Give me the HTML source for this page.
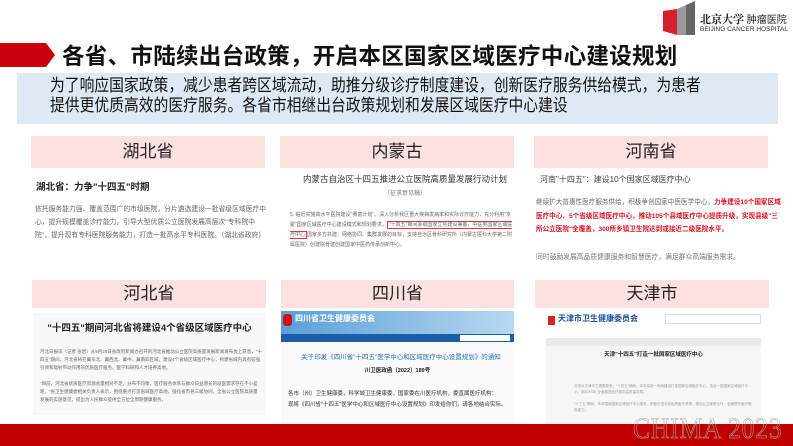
<!DOCTYPE html>
<html><head><meta charset="utf-8"><style>
*{margin:0;padding:0;box-sizing:border-box}
body{width:793px;height:446px;overflow:hidden;background:#fff;position:relative;font-family:"Liberation Sans","Noto Sans CJK SC",sans-serif;color:#222}
.a{position:absolute}
.hd{position:absolute;background:#fde0e0;font-size:17px;text-align:center;color:#222}
.sm{font-size:7px;color:#666;line-height:13px}
</style></head><body>
<svg class="a" style="left:662px;top:1px" width="34" height="34" viewBox="0 0 34 34">
<polygon points="1,10 15,8 15,34 1,30" fill="#d3202a"/>
<polygon points="15,8 24,4 24,34 15,34" fill="#999"/>
<polygon points="24,4 33,0 33,34 24,34" fill="#666"/>
</svg>
<div class="a" style="left:700px;top:11px;font-size:11px;color:#222;font-family:'Noto Serif CJK SC',serif;font-weight:bold;white-space:nowrap">北京大学 <span style="font-family:'Noto Sans CJK SC';font-weight:normal;font-size:10px">肿瘤医院</span></div>
<div class="a" style="left:700px;top:26px;font-size:6.5px;color:#333;white-space:nowrap">BEIJING CANCER HOSPITAL</div>
<svg class="a" style="left:0;top:43px" width="56" height="24"><polygon points="0,0 46,0 55,12 46,24 0,24" fill="#c8000b"/></svg>
<div class="a" style="left:62px;top:39px;font-size:22.5px;font-weight:bold;color:#111;letter-spacing:0.3px;white-space:nowrap">各省、市陆续出台政策，开启本区国家区域医疗中心建设规划</div>
<div class="a" style="left:17px;top:73px;width:761px;height:51px;background:#dfe9f5"></div>
<div class="a" style="left:50px;top:76px;font-size:17px;line-height:20px;color:#111;white-space:nowrap;transform:scaleX(0.87);transform-origin:left top">为了响应国家政策，减少患者跨区域流动，助推分级诊疗制度建设，创新医疗服务供给模式，为患者<br>提供更优质高效的医疗服务。各省市相继出台政策规划和发展区域医疗中心建设</div>

<div class="hd" style="left:31px;top:136px;width:234px;height:32px;line-height:32px">湖北省</div>
<div class="hd" style="left:280px;top:136px;width:234px;height:32px;line-height:32px">内蒙古</div>
<div class="hd" style="left:534px;top:136px;width:234px;height:32px;line-height:32px">河南省</div>

<div class="a" style="left:36px;top:179px;font-size:9.5px;font-weight:bold">湖北省：力争"十四五"时期</div>
<div class="a sm" style="left:35px;top:203px;width:232px;font-size:6.8px">依托服务能力强、覆盖范围广的市级医院，分片遴选建设一批省级区域医疗中心，提升规模覆盖诊疗能力。引导大型优质公立医院发展高层次"专科院中院"，提升现有专科医院服务能力，打造一批高水平专科医院。（湖北省政府）</div>

<div class="a" style="left:290px;top:173px;width:230px;text-align:center;font-size:8.5px;color:#333">内蒙古自治区十四五推进公立医院高质量发展行动计划</div>
<div class="a" style="left:290px;top:188px;width:230px;text-align:center;font-size:6px;color:#777">（征求意见稿）</div>
<div class="a sm" style="left:290px;top:210px;width:226px;font-size:5px;line-height:10px">5. 临近实施高水平医院建设"赛富计划"。深入分析我区重大疾病发病率和实际诊疗能力，充分利用"京蒙"国家区域医疗中心建设模式和规划要求，<span style="border:1px solid #e33;padding:0 1px">"十四五"期间争取国家立项建设兼备，中医类国家区域医疗中心</span>国家多方共建、网络协同、集群发展的目标，支持自治区骨科研究所（内蒙古医科大学第二附属医院）创建院骨建创建国家中医药传承创新中心。</div>

<div class="a" style="left:540px;top:174px;font-size:8px;color:#444">河南"十四五"：建设10个国家区域医疗中心</div>
<div class="a" style="left:536px;top:196px;width:246px;font-size:6.6px;line-height:13.5px;color:#666">继续扩大普惠性医疗服务供给，积极争创国家中医医学中心，<b style="color:#e0101d">力争建设10个国家区域医疗中心、5个省级区域医疗中心，推动105个县域医疗中心提质升级，实现县级"三所公立医院"全覆盖，300所乡镇卫生院达到或接近二级医院水平。</b></div>
<div class="a" style="left:536px;top:251px;font-size:6.8px;color:#777">同时鼓励发展高品质健康服务和智慧医疗，满足群众高端服务需求。</div>

<div class="hd" style="left:32px;top:280px;width:234px;height:28px;line-height:28px">河北省</div>
<div class="hd" style="left:281px;top:280px;width:233px;height:28px;line-height:28px">四川省</div>
<div class="hd" style="left:535px;top:280px;width:234px;height:28px;line-height:28px">天津市</div>

<div class="a" style="left:33px;top:313px;width:233px;height:102px;background:#f8f8f8"></div>
<div class="a" style="left:33px;top:320px;width:233px;text-align:center;font-size:9.5px;font-weight:bold;color:#222">"十四五"期间河北省将建设4个省级区域医疗中心</div>
<div class="a sm" style="left:40px;top:348px;width:222px;font-size:4.5px;line-height:8px">河北日报讯（记者 张岩）从9月28日省政府新闻办召开的河北省推动公立医院高质量发展新闻发布会上获悉，"十四五"期间，河北省将在冀东北、冀西北、冀中、冀南四区域，建设4个省级区域医疗中心，构建省域内具有较强引领和辐射带动作用的优质医疗服务。医学科研和人才培养高地。<br><br>"目前，河北省优质医疗资源总量相对不足，分布不均衡，医疗服务体系与群众日益增长的就医需求存在不小差距。"省卫生健康委相关负责人表示，围绕重点打造省域医疗高地，强化省市县三级协同，全省公立医院高质量发展的实施意见，提出为人民群众提供全方位全周期健康服务。</div>

<div class="a" style="left:281px;top:311px;width:233px;height:115px;background:#fafafa"></div>
<div class="a" style="left:281px;top:311px;width:233px;height:23px;background:linear-gradient(90deg,#5a9fd8,#b8d8f0)"></div>
<div class="a" style="left:283px;top:314px;width:9px;height:12px;background:#c8141c;border-radius:3px"></div>
<div class="a" style="left:295px;top:313px;font-size:8px;font-weight:bold;color:#fff">四川省卫生健康委员会</div>
<div class="a" style="left:281px;top:334px;width:233px;height:8px;background:#1a5fa8"></div>
<div class="a" style="left:460px;top:335px;width:50px;height:6px;background:#fff"></div>
<div class="a" style="left:290px;top:351px;width:222px;font-size:6.5px;color:#2a6cc0;text-align:center">关于印发《四川省"十四五"医学中心和区域医疗中心设置规划》的通知</div>
<div class="a" style="left:281px;top:366px;width:233px;text-align:center;font-size:5.5px;font-weight:bold">川卫医政函〔2022〕189号</div>
<div class="a sm" style="left:288px;top:389px;width:222px;font-size:5.5px;line-height:11px;color:#333">各市（州）卫生健康委，科学城卫生健康委，国家委在川医疗机构，委直属医疗机构：<br>现将《四川省"十四五"医学中心和区域医疗中心设置规划》印发给你们，请各地结合实际。</div>

<div class="a" style="left:546px;top:311px;width:215px;height:115px;background:#f6f6f6"></div>
<div class="a" style="left:546px;top:311px;width:215px;height:27px;background:#fff"></div>
<div class="a" style="left:548px;top:316px;width:7px;height:9px;background:#d22"></div>
<div class="a" style="left:558px;top:313px;font-size:8px;font-weight:bold;color:#1a4fa0">天津市卫生健康委员会</div>
<div class="a" style="left:665px;top:314px;width:96px;height:10px;border:1px solid #ddd;background:#fff"></div>
<div class="a" style="left:546px;top:338px;width:215px;height:8px;background:#eaeaea"></div>
<div class="a" style="left:546px;top:350px;width:215px;text-align:center;font-size:5.5px;font-weight:bold;color:#222">天津"十四五"打造一批国家区域医疗中心</div>
<div class="a sm" style="left:574px;top:383px;width:180px;font-size:3.5px;line-height:6px;color:#999">近来从天津市卫健委获悉，"十四五"期间，本市将统一布局建设打造国家区域医疗中心，结合一批国家区域医疗中心，到20XX年 全面推进医疗服务高质量发展。<br><br>"十三五"期间，本市围绕国家区域医疗中心建设，积极引进北京优质医疗资源，推动公立医院合作，全面提升医疗服务能力。</div>

<div class="a" style="left:0;top:424px;width:793px;height:22px;background:#c00000"></div>
<div class="a" style="left:633px;top:412px;white-space:nowrap;font-family:'Liberation Serif',serif;font-size:30px;line-height:34px;color:transparent;-webkit-text-stroke:0.6px #aaa;letter-spacing:1px;transform:scaleX(0.85);transform-origin:left">CHIMA 2023</div>
</body></html>
